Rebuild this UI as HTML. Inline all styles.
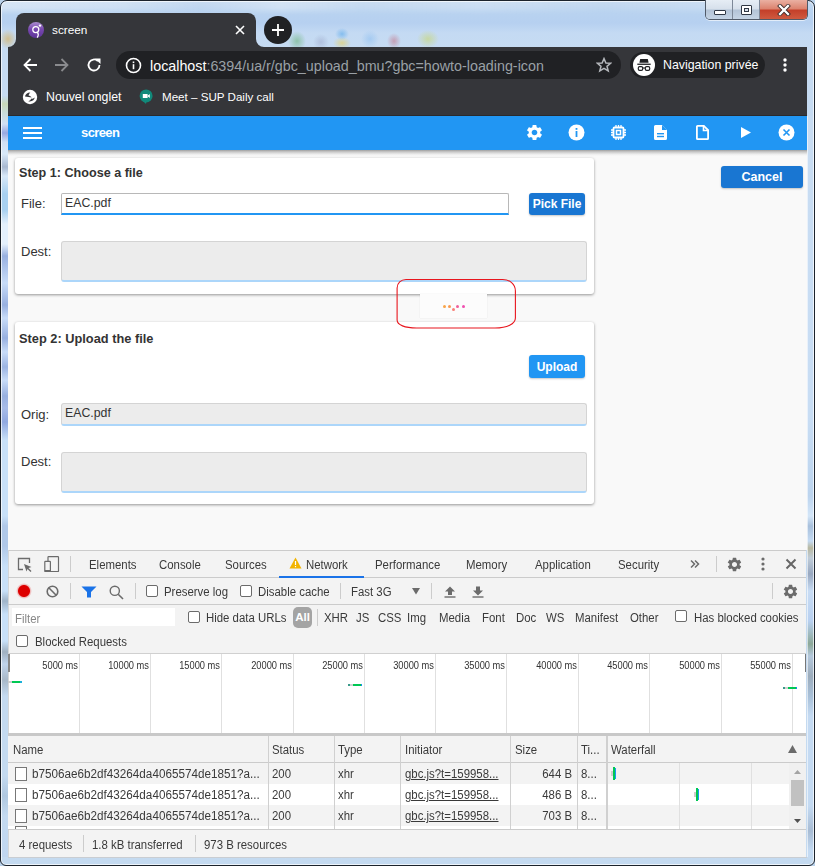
<!DOCTYPE html>
<html><head><meta charset="utf-8">
<style>
*{margin:0;padding:0;box-sizing:border-box}
html,body{width:815px;height:866px;overflow:hidden;font-family:"Liberation Sans",sans-serif}
body{position:relative;background:#b9d1ea}
.a{position:absolute}
#frame{left:0;top:0;width:815px;height:866px;border:1px solid #1c232c;border-radius:7px 7px 6px 6px;box-shadow:inset 0 0 0 1px rgba(255,255,255,.7);
 background:linear-gradient(180deg,#c4d9f0 0,#b9d3f0 10px,#b6d0f0 22px,#c4daf3 32px,#c6dbf2 47px,#c4daf0 100%)}
#chrome{left:8px;top:47px;width:799px;height:69px;background:#35363a;border-bottom:1px solid #2a2a2c}
#tab{left:16px;top:13px;width:240px;height:35px;background:#35363a;border-radius:8px 8px 0 0}
#newtab{left:264px;top:16px;width:28px;height:28px;border-radius:50%;background:#202124}
#omni{left:116px;top:51px;width:505px;height:28px;border-radius:14px;background:#202124}
#incog{left:630px;top:52px;width:135px;height:26px;border-radius:13px;background:#202124}
.wt{color:#e8eaed;font-size:13px;white-space:nowrap}
#appbar{left:8px;top:116px;width:799px;height:34px;background:#2196f3}
#content{left:8px;top:150px;width:799px;height:400px;background:#f9f9f9}
.card{background:#fff;border-radius:3px;box-shadow:0 1px 3px rgba(0,0,0,.4)}
.lbl{font-size:13px;color:#333}
.inp{background:#ececec;border:1px solid #d4d4d4;border-bottom:2px solid #acd6fa;border-radius:3px}
.btn{background:#1976d2;color:#fff;font-weight:bold;font-size:12px;border-radius:3px;text-align:center;box-shadow:0 1px 2px rgba(0,0,0,.22)}
#dev{left:8px;top:550px;width:799px;height:307px;background:#f3f3f3;border-top:1px solid #ccc}
.dt{font-size:12px;color:#3a3a3a;white-space:nowrap;transform:scaleX(.95);transform-origin:0 0}
.ovl{font-size:10px;color:#333;white-space:nowrap;transform:scaleX(.93);transform-origin:100% 0}
.cb{width:12px;height:12px;border:1px solid #6b6b6b;border-radius:2px;background:#fff}
</style></head><body>
<div id="frame" class="a"></div>
<div class="a" style="left:280px;top:24px;width:170px;height:23px;background:
radial-gradient(ellipse 9px 10px at 17px 17px,rgba(120,185,140,.7),rgba(120,185,140,0)),
radial-gradient(ellipse 8px 8px at 41px 18px,rgba(150,160,195,.45),rgba(150,160,195,0)),
radial-gradient(ellipse 7px 6px at 62px 10px,rgba(90,170,235,.6),rgba(90,170,235,0)),
radial-gradient(ellipse 9px 6px at 62px 19px,rgba(225,210,120,.75),rgba(225,210,120,0)),
radial-gradient(ellipse 9px 9px at 90px 15px,rgba(140,190,240,.55),rgba(140,190,240,0)),
radial-gradient(ellipse 7px 8px at 114px 17px,rgba(195,100,120,.5),rgba(195,100,120,0)),
radial-gradient(ellipse 11px 9px at 148px 15px,rgba(200,215,120,.65),rgba(200,215,120,0))"></div>
<div class="a" style="left:1px;top:22px;width:15px;height:28px;background:radial-gradient(ellipse 9px 10px at 7px 17px,rgba(210,185,125,.85),rgba(210,185,125,0))"></div>
<div class="a" style="left:1px;top:96px;width:7px;height:761px;background:linear-gradient(180deg,#c4daf0 0,#c8d8b8 8px,#c8dcd8 16px,#d0e0f4 28px,#98a8e0 37px,#d0e0f4 46px,#d8e8f8 58px,#a8b8d0 71px,#d8e8f8 80px,#a8d0f0 98px,#a8d0f0 114px,#e4f0fc 128px,#e4f0fc 148px,#98b0e0 160px,#c8dcf8 187px,#98b0e0 209px,#c8dcf8 222px,#98b0e0 242px,#c8dcf8 256px,#9cb4e2 271px,#c8dcf8 284px,#98b0e0 300px,#a8bce8 312px,#90a8e0 326px,#c8e0f8 344px,#c8e0f8 420px,#b0c8e8 430px,#b0c8e8 450px,#c8e0f8 470px,#c8e0f8 495px,#a0b4c8 505px,#c8e0f8 518px,#c8e0f8 545px,#a0b0c0 556px,#c0d4ec 568px,#a8b8c8 584px,#c4daf0 600px,#c4daf0 680px,#b0c8e0 700px,#c4daf0 720px,#c0d6f0 761px);box-shadow:inset 1px 0 0 rgba(255,255,255,.7)"></div>
<div class="a" style="left:807px;top:116px;width:7px;height:741px;background:linear-gradient(180deg,#c8dcf2 0,#c8ddf4 300px,#bcd4ee 380px,#d4e6f8 400px,#a8c0dc 410px,#c4daf2 425px,#b8b8a0 432px,#c0ccd8 442px,#98a8c0 458px,#c8dcf4 475px,#b8d0f0 505px,#8ca898 528px,#b4c8dc 540px,#9cacbc 560px,#a8c0d8 580px,#c4daf2 600px,#c4daf2 690px,#a8bcd4 715px,#c4daf2 735px,#c4daf2 741px);box-shadow:inset 1px 0 0 rgba(255,255,255,.6),inset -1px 0 0 rgba(255,255,255,.7)"></div>
<div class="a" style="left:1px;top:1px;width:704px;height:14px;border-radius:6px 0 0 0;background:linear-gradient(90deg,rgba(255,255,255,.35) 0,rgba(255,255,255,.25) 120px,rgba(255,255,255,.05) 200px,rgba(255,255,255,.3) 280px,rgba(255,255,255,.1) 360px,rgba(255,255,255,.2) 480px,rgba(255,255,255,.05) 600px,rgba(255,255,255,.15) 704px);-webkit-mask-image:linear-gradient(180deg,#000 0,#000 50%,transparent 100%)"></div>
<div id="chrome" class="a"></div>
<div id="tab" class="a"></div>
<div id="newtab" class="a"></div>
<div id="omni" class="a"></div>
<div id="incog" class="a"></div>

<!-- window controls -->
<div class="a" style="left:705px;top:0;width:103px;height:20px;border:1px solid #505a68;border-top:none;border-radius:0 0 5px 5px;overflow:hidden;display:flex;box-shadow:0 1px 0 rgba(255,255,255,.6)">
 <div style="width:27px;height:100%;background:linear-gradient(#e6edf5 0%,#d6e0eb 48%,#b3c3d6 52%,#c5d4e4 100%);border-right:1px solid #7d8898;position:relative"><div class="a" style="left:8px;top:10px;width:12px;height:5px;background:#fff;border:1px solid #303844;border-radius:1px"></div></div>
 <div style="width:27px;height:100%;background:linear-gradient(#e6edf5 0%,#d6e0eb 48%,#b3c3d6 52%,#c5d4e4 100%);border-right:1px solid #7d8898;position:relative"><div class="a" style="left:8px;top:5px;width:11px;height:10px;border:1px solid #303844;background:#fff;border-radius:1px"><div class="a" style="left:2px;top:2px;width:5px;height:4px;border:1px solid #303844;background:#d8e0ea"></div></div></div>
 <div style="flex:1;height:100%;background:linear-gradient(#eab0a2 0%,#dc8470 45%,#c4402a 55%,#cf5a40 100%);position:relative">
  <svg class="a" style="left:17px;top:4px" width="14" height="12" viewBox="0 0 14 12"><path d="M3 2L11 10M11 2L3 10" stroke="#3a2a2a" stroke-width="4" stroke-linecap="square"/><path d="M3 2L11 10M11 2L3 10" stroke="#fff" stroke-width="2.3" stroke-linecap="square"/></svg>
 </div>
</div>
<!-- tab -->
<svg class="a" style="left:8px;top:39px" width="8" height="8" viewBox="0 0 8 8"><path d="M8 0V8H0A8 8 0 0 0 8 0Z" fill="#35363a"/></svg>
<svg class="a" style="left:256px;top:39px" width="8" height="8" viewBox="0 0 8 8"><path d="M0 0V8H8A8 8 0 0 1 0 0Z" fill="#35363a"/></svg>
<svg class="a" style="left:28px;top:22px" width="16" height="16" viewBox="0 0 16 16">
 <defs><linearGradient id="fg" x1="0" y1="0" x2="0" y2="1"><stop offset="0" stop-color="#ab8dd0"/><stop offset=".45" stop-color="#7848b0"/><stop offset="1" stop-color="#5e3498"/></linearGradient></defs>
 <circle cx="8" cy="8" r="8" fill="url(#fg)"/>
 <circle cx="7.8" cy="7.6" r="3" fill="none" stroke="#fff" stroke-width="1.3"/>
 <path d="M9.4 10.2C10.4 11.5 10.4 13.8 9.2 15.6" fill="none" stroke="#fff" stroke-width="1.3"/>
 <circle cx="12" cy="3.6" r="1.2" fill="#fff"/>
</svg>
<div class="a wt" style="left:52px;top:23px;font-size:11.8px;color:#fff">screen</div>
<svg class="a" style="left:235px;top:25px" width="10" height="10" viewBox="0 0 10 10"><path d="M1 1L9 9M9 1L1 9" stroke="#fff" stroke-width="1.6"/></svg>
<svg class="a" style="left:271px;top:23px" width="14" height="14" viewBox="0 0 14 14"><path d="M7 1V13M1 7H13" stroke="#fff" stroke-width="1.8"/></svg>
<!-- toolbar icons -->
<svg class="a" style="left:22px;top:57px" width="16" height="16" viewBox="0 0 16 16"><path d="M15 8H2.5M8.5 2L2.5 8L8.5 14" fill="none" stroke="#fff" stroke-width="1.8"/></svg>
<svg class="a" style="left:54px;top:57px" width="16" height="16" viewBox="0 0 16 16"><path d="M1 8H13.5M7.5 2L13.5 8L7.5 14" fill="none" stroke="#8a8b8e" stroke-width="1.8"/></svg>
<svg class="a" style="left:86px;top:57px" width="16" height="16" viewBox="0 0 16 16"><path d="M13.5 8A5.5 5.5 0 1 1 11.9 4.1" fill="none" stroke="#fff" stroke-width="1.8"/><path d="M9 1.5H14.5V7Z" fill="#fff"/></svg>
<svg class="a" style="left:125px;top:57px" width="17" height="17" viewBox="0 0 17 17"><circle cx="8.5" cy="8.5" r="7" fill="none" stroke="#fff" stroke-width="1.6"/><rect x="7.7" y="7.2" width="1.6" height="5" fill="#fff"/><rect x="7.7" y="4.5" width="1.6" height="1.6" fill="#fff"/></svg>
<div class="a wt" style="left:150px;top:58px;font-size:14.3px;color:#fff">localhost<span style="color:#9aa0a6">:6394/ua/r/gbc_upload_bmu?gbc=howto-loading-icon</span></div>
<svg class="a" style="left:596px;top:57px" width="16" height="16" viewBox="0 0 16 16"><path d="M8 1.6L9.9 6.1L14.6 6.3L11 9.3L12.2 14L8 11.4L3.8 14L5 9.3L1.4 6.3L6.1 6.1Z" fill="none" stroke="#b5b8bc" stroke-width="1.5" stroke-linejoin="miter"/></svg>
<div class="a" style="left:633px;top:54px;width:22px;height:22px;border-radius:50%;background:#fff"></div>
<svg class="a" style="left:633px;top:54px" width="22" height="22" viewBox="0 0 22 22"><path d="M7.2 5H14.8L15.6 8.8H6.4Z" fill="#202124"/><rect x="4.3" y="9.6" width="13.4" height="1.3" fill="#202124"/><rect x="5.3" y="12.6" width="4.4" height="3.8" rx="1.3" fill="none" stroke="#202124" stroke-width="1.2"/><rect x="12.3" y="12.6" width="4.4" height="3.8" rx="1.3" fill="none" stroke="#202124" stroke-width="1.2"/><path d="M9.7 14H12.3" stroke="#202124" stroke-width="1.1"/></svg>
<div class="a wt" style="left:663px;top:58px;font-size:12.35px;color:#fff">Navigation privée</div>
<svg class="a" style="left:782px;top:57px" width="6" height="16" viewBox="0 0 6 16"><circle cx="3" cy="3" r="1.7" fill="#fff"/><circle cx="3" cy="8" r="1.7" fill="#fff"/><circle cx="3" cy="13" r="1.7" fill="#fff"/></svg>
<!-- bookmarks -->
<svg class="a" style="left:22px;top:89px" width="16" height="16" viewBox="0 0 16 16"><circle cx="8" cy="8" r="7.2" fill="#fff"/><path d="M3 7.6C3.3 5.2 5.3 3.5 8.3 3.4C7.2 4.4 7 5.4 6.4 6.3C7.8 6.8 9 7.4 9.6 8.6C8 8.2 5.2 7.9 3 7.6Z" fill="#35363a"/><path d="M6.3 12.4C7.8 11.6 8.9 10.6 9.4 9.4C10.5 9.9 11.7 9.6 12.7 8.6C12.5 11.2 10 13 6.3 12.4Z" fill="#35363a"/></svg>
<div class="a wt" style="left:46px;top:90px;font-size:12.35px;color:#fff">Nouvel onglet</div>
<svg class="a" style="left:139px;top:89px" width="15" height="16" viewBox="0 0 15 16"><circle cx="7.1" cy="6.9" r="6.5" fill="#11897a"/><path d="M4 12L7 15L7.5 12Z" fill="#11897a"/><rect x="3.8" y="5" width="4.8" height="4" fill="#fff"/><path d="M8.3 7L10.8 5V9Z" fill="#fff"/></svg>
<div class="a wt" style="left:162px;top:90px;font-size:11.6px;color:#fff">Meet – SUP Daily call</div>
<div id="appbar" class="a"></div>
<div id="content" class="a"></div>

<!-- app bar contents -->
<div class="a" style="left:23px;top:127px;width:19px;height:2px;background:#fff"></div>
<div class="a" style="left:23px;top:132px;width:19px;height:2px;background:#fff"></div>
<div class="a" style="left:23px;top:137px;width:19px;height:2px;background:#fff"></div>
<div class="a" style="left:81px;top:125px;font-size:13px;font-weight:bold;color:#fff;white-space:nowrap;letter-spacing:-0.6px">screen</div>
<svg class="a" style="left:525px;top:123px" width="19" height="19" viewBox="0 0 24 24"><path fill="#fff" d="M19.14 12.94c.04-.3.06-.61.06-.94 0-.32-.02-.64-.07-.94l2.03-1.58a.49.49 0 0 0 .12-.61l-1.92-3.32a.488.488 0 0 0-.59-.22l-2.39.96c-.5-.38-1.03-.7-1.62-.94l-.36-2.54a.484.484 0 0 0-.48-.41h-3.84c-.24 0-.43.17-.47.41l-.36 2.54c-.59.24-1.13.57-1.62.94l-2.39-.96c-.22-.08-.47 0-.59.22L2.74 8.87c-.12.21-.8.47.12.61l2.03 1.58c-.05.3-.09.63-.09.94s.02.64.07.94l-2.03 1.58a.49.49 0 0 0-.12.61l1.92 3.32c.12.22.37.29.59.22l2.39-.96c.5.38 1.03.7 1.62.94l.36 2.54c.05.24.24.41.48.41h3.84c.24 0 .44-.17.47-.41l.36-2.54c.59-.24 1.13-.56 1.62-.94l2.39.96c.22.08.47 0 .59-.22l1.92-3.32c.12-.22.07-.47-.12-.61l-2.01-1.58zM12 15.6c-1.98 0-3.6-1.62-3.6-3.6s1.62-3.6 3.6-3.6 3.6 1.62 3.6 3.6-1.62 3.6-3.6 3.6z"/></svg>
<svg class="a" style="left:568px;top:124px" width="17" height="17" viewBox="0 0 17 17"><circle cx="8.5" cy="8.5" r="8" fill="#fff"/><rect x="7.6" y="7" width="1.8" height="6" fill="#2196f3"/><rect x="7.6" y="4" width="1.8" height="1.8" fill="#2196f3"/></svg>
<svg class="a" style="left:610px;top:124px" width="17" height="17" viewBox="0 0 17 17"><rect x="3.5" y="3.5" width="10" height="10" rx="1" fill="none" stroke="#fff" stroke-width="1.8"/><rect x="6.5" y="6.5" width="4" height="4" fill="none" stroke="#fff" stroke-width="1.5"/><path d="M6 1v2M8.5 1v2M11 1v2M6 14v2M8.5 14v2M11 14v2M1 6h2M1 8.5h2M1 11h2M14 6h2M14 8.5h2M14 11h2" stroke="#fff" stroke-width="1.3"/></svg>
<svg class="a" style="left:654px;top:125px" width="13" height="15" viewBox="0 0 13 15"><path d="M1.5 0H8L13 5V13.5A1.5 1.5 0 0 1 11.5 15H1.5A1.5 1.5 0 0 1 0 13.5V1.5A1.5 1.5 0 0 1 1.5 0Z" fill="#fff"/><path d="M8 0V5H13" fill="#2196f3"/><path d="M8 0L13 5H8Z" fill="#fff" opacity="0"/><rect x="3" y="8" width="7" height="1.4" fill="#2196f3"/><rect x="3" y="10.8" width="7" height="1.4" fill="#2196f3"/></svg>
<svg class="a" style="left:696px;top:125px" width="13" height="15" viewBox="0 0 13 15"><path d="M1.5 0.9H7.8L12.1 5.2V13.5A.6.6 0 0 1 11.5 14.1H1.5A.6.6 0 0 1 0.9 13.5V1.5A.6.6 0 0 1 1.5 0.9Z" fill="none" stroke="#fff" stroke-width="1.8"/><path d="M7.5 0.5V5.5H12.5" fill="none" stroke="#fff" stroke-width="1.6"/></svg>
<svg class="a" style="left:741px;top:127px" width="10" height="11" viewBox="0 0 10 11"><path d="M0 0L10 5.5L0 11Z" fill="#fff"/></svg>
<svg class="a" style="left:778px;top:124px" width="17" height="17" viewBox="0 0 17 17"><circle cx="8.5" cy="8.5" r="8" fill="#fff"/><path d="M5.5 5.5L11.5 11.5M11.5 5.5L5.5 11.5" stroke="#2196f3" stroke-width="1.6"/></svg>
<!-- app bar shadow -->
<div class="a" style="left:8px;top:150px;width:799px;height:6px;background:linear-gradient(rgba(0,0,0,.36),rgba(0,0,0,.2) 30%,rgba(0,0,0,.05) 70%,rgba(0,0,0,0))"></div>
<!-- card 1 -->
<div class="a card" style="left:15px;top:158px;width:579px;height:136px"></div>
<div class="a" style="left:19px;top:166px;font-size:12.6px;font-weight:bold;color:#333;white-space:nowrap">Step 1: Choose a file</div>
<div class="a lbl" style="left:21px;top:196px">File:</div>
<div class="a" style="left:61px;top:193px;width:448px;height:22px;background:#fff;border:1px solid #b8b8b8;border-bottom:2px solid #2196f3;border-radius:2px 2px 0 0"></div>
<div class="a lbl" style="left:65px;top:196px;font-size:12.3px">EAC.pdf</div>
<div class="a btn" style="left:529px;top:193px;width:56px;height:22px;line-height:22px">Pick File</div>
<div class="a lbl" style="left:21px;top:244px">Dest:</div>
<div class="a inp" style="left:61px;top:241px;width:526px;height:41px"></div>
<div class="a btn" style="left:721px;top:166px;width:82px;height:22px;line-height:22px;font-size:12.5px">Cancel</div>
<!-- spinner -->
<div class="a" style="left:420px;top:294px;width:67px;height:24px;background:#fcfcfc;box-shadow:0 0 1px rgba(0,0,0,.12)"></div>

<div class="a" style="left:442.5px;top:304.5px;width:3px;height:3px;border-radius:50%;background:#f9a54a"></div>
<div class="a" style="left:447.5px;top:304.5px;width:3px;height:3px;border-radius:50%;background:#f99a50"></div>
<div class="a" style="left:451.5px;top:307.5px;width:3px;height:3px;border-radius:50%;background:#f98078"></div>
<div class="a" style="left:455.5px;top:304.5px;width:3px;height:3px;border-radius:50%;background:#f0609a"></div>
<div class="a" style="left:461.5px;top:304.5px;width:3px;height:3px;border-radius:50%;background:#f050b0"></div>
<!-- card 2 -->
<div class="a card" style="left:15px;top:322px;width:579px;height:182px"></div>
<div class="a" style="left:19px;top:331px;font-size:12.8px;font-weight:bold;color:#333;white-space:nowrap">Step 2: Upload the file</div>
<div class="a btn" style="left:529px;top:355px;width:56px;height:23px;line-height:24px;background:#2196f3">Upload</div>
<div class="a lbl" style="left:21px;top:407px">Orig:</div>
<div class="a inp" style="left:61px;top:403px;width:526px;height:23px"></div>
<div class="a lbl" style="left:65px;top:406px;font-size:12.3px">EAC.pdf</div>
<div class="a lbl" style="left:21px;top:454px">Dest:</div>
<div class="a inp" style="left:61px;top:452px;width:526px;height:41px"></div>

<!-- devtools -->
<div class="a" style="left:8px;top:550px;width:798px;height:307px;background:#f3f3f3"></div>
<div class="a" style="left:8px;top:550px;width:798px;height:1px;background:#cbcbcb"></div>
<div class="a" style="left:8px;top:550px;width:1px;height:307px;background:#d4d6d8"></div>
<div class="a" style="left:8px;top:577px;width:798px;height:1px;background:#cbcbcb"></div>
<div class="a" style="left:8px;top:604px;width:798px;height:1px;background:#cbcbcb"></div>
<!-- tab bar -->
<svg class="a" style="left:17px;top:557px" width="16" height="15" viewBox="0 0 16 15"><path d="M6 12.5H1.5V1.5H12.5V6" fill="none" stroke="#6b6b6b" stroke-width="1.3"/><path d="M7 7L14.5 10L11.5 11L14.5 14L13.5 15L10.5 12L9.5 14.5Z" fill="#6b6b6b"/></svg>
<svg class="a" style="left:43px;top:555px" width="17" height="17" viewBox="0 0 17 17"><rect x="5" y="1.6" width="10.5" height="15" rx=".6" fill="none" stroke="#6b6b6b" stroke-width="1.2"/><rect x="1.8" y="6.4" width="5.6" height="10.2" rx=".6" fill="#f3f3f3" stroke="#6b6b6b" stroke-width="1.2"/><rect x="1.8" y="15" width="5.6" height="1.6" fill="#6b6b6b"/></svg>
<div class="a" style="left:70px;top:556px;width:1px;height:16px;background:#ccc"></div>
<div class="a dt" style="left:89px;top:558px">Elements</div>
<div class="a dt" style="left:159px;top:558px">Console</div>
<div class="a dt" style="left:225px;top:558px">Sources</div>
<svg class="a" style="left:289px;top:557px" width="13" height="12" viewBox="0 0 13 12"><path d="M6.5 0.5L12.5 11.5H0.5Z" fill="#f2b400"/><rect x="5.9" y="4" width="1.2" height="4" fill="#fff"/><rect x="5.9" y="9" width="1.2" height="1.2" fill="#fff"/></svg>
<div class="a dt" style="left:306px;top:558px">Network</div>
<div class="a" style="left:279px;top:576px;width:85px;height:2px;background:#1a73e8"></div>
<div class="a dt" style="left:375px;top:558px">Performance</div>
<div class="a dt" style="left:466px;top:558px">Memory</div>
<div class="a dt" style="left:535px;top:558px">Application</div>
<div class="a dt" style="left:618px;top:558px">Security</div>
<svg class="a" style="left:690px;top:559px" width="10" height="10" viewBox="0 0 10 10"><path d="M1 1.5L4.5 5L1 8.5M5 1.5L8.5 5L5 8.5" fill="none" stroke="#6b6b6b" stroke-width="1.5"/></svg>
<div class="a" style="left:716px;top:556px;width:1px;height:16px;background:#ccc"></div>
<svg class="a" style="left:726px;top:556px" width="17" height="17" viewBox="0 0 24 24"><path fill="#6b6b6b" d="M19.14 12.94c.04-.3.06-.61.06-.94 0-.32-.02-.64-.07-.94l2.03-1.58a.49.49 0 0 0 .12-.61l-1.92-3.32a.488.488 0 0 0-.59-.22l-2.39.96c-.5-.38-1.03-.7-1.62-.94l-.36-2.54a.484.484 0 0 0-.48-.41h-3.84c-.24 0-.43.17-.47.41l-.36 2.54c-.59.24-1.130.57-1.62.94l-2.39-.96c-.22-.08-.47 0-.59.22L2.74 8.87c-.12.21-.8.47.12.61l2.03 1.58c-.05.3-.09.63-.09.94s.02.64.07.94l-2.03 1.58a.49.49 0 0 0-.12.61l1.92 3.32c.12.22.37.29.59.22l2.39-.96c.5.38 1.03.7 1.620.94l.36 2.54c.05.24.24.41.48.41h3.84c.24 0 .44-.17.47-.41l.36-2.54c.59-.24 1.13-.56 1.62-.94l2.39.96c.22.08.47 0 .59-.22l1.92-3.32c.12-.22.07-.47-.12-.61l-2.01-1.58zM12 15.6c-1.98 0-3.6-1.620-3.6-3.6s1.62-3.6 3.6-3.6 3.6 1.62 3.6 3.6-1.62 3.6-3.6 3.6z"/></svg>
<svg class="a" style="left:760px;top:556px" width="6" height="16" viewBox="0 0 6 16"><circle cx="3" cy="3" r="1.6" fill="#6b6b6b"/><circle cx="3" cy="8" r="1.6" fill="#6b6b6b"/><circle cx="3" cy="13" r="1.6" fill="#6b6b6b"/></svg>
<svg class="a" style="left:785px;top:558px" width="12" height="12" viewBox="0 0 12 12"><path d="M1.5 1.5L10.5 10.5M10.5 1.5L1.5 10.5" stroke="#666" stroke-width="2"/></svg>
<!-- toolbar -->
<div class="a" style="left:16px;top:583px;width:16px;height:16px;border-radius:50%;background:radial-gradient(circle,#d00 0,#d00 5.5px,rgba(230,80,80,.35) 6.5px,rgba(230,80,80,0) 8px)"></div>
<svg class="a" style="left:46px;top:585px" width="13" height="13" viewBox="0 0 13 13"><circle cx="6.5" cy="6.5" r="5.3" fill="none" stroke="#6b6b6b" stroke-width="1.6"/><path d="M2.8 2.8L10.2 10.2" stroke="#6b6b6b" stroke-width="1.6"/></svg>
<div class="a" style="left:70px;top:583px;width:1px;height:16px;background:#ccc"></div>
<svg class="a" style="left:81px;top:586px" width="16" height="12" viewBox="0 0 16 12"><path d="M0.5 0.5H15.5L10 6V11.5H6V6Z" fill="#1a73e8"/></svg>
<svg class="a" style="left:109px;top:585px" width="15" height="15" viewBox="0 0 15 15"><circle cx="5.8" cy="5.8" r="4.6" fill="none" stroke="#6b6b6b" stroke-width="1.4"/><path d="M9.2 9.2L14 14" stroke="#6b6b6b" stroke-width="1.6"/></svg>
<div class="a" style="left:135px;top:583px;width:1px;height:16px;background:#ccc"></div>
<div class="a cb" style="left:146px;top:585px"></div>
<div class="a dt" style="left:164px;top:585px">Preserve log</div>
<div class="a cb" style="left:240px;top:585px"></div>
<div class="a dt" style="left:258px;top:585px">Disable cache</div>
<div class="a" style="left:340px;top:583px;width:1px;height:16px;background:#ccc"></div>
<div class="a dt" style="left:351px;top:585px">Fast 3G</div>
<svg class="a" style="left:412px;top:588px" width="8" height="7" viewBox="0 0 8 7"><path d="M0 0H8L4 6.5Z" fill="#6b6b6b"/></svg>
<div class="a" style="left:431px;top:583px;width:1px;height:16px;background:#ccc"></div>
<svg class="a" style="left:444px;top:586px" width="12" height="12" viewBox="0 0 12 12"><path d="M6 0.5L11 5.5H8V9H4V5.5H1Z" fill="#6b6b6b"/><rect x="0.5" y="10.3" width="11" height="1.4" fill="#6b6b6b"/></svg>
<svg class="a" style="left:472px;top:586px" width="12" height="12" viewBox="0 0 12 12"><path d="M6 9.5L11 4.5H8V0.5H4V4.5H1Z" fill="#6b6b6b"/><rect x="0.5" y="10.3" width="11" height="1.4" fill="#6b6b6b"/></svg>
<div class="a" style="left:772px;top:583px;width:1px;height:16px;background:#ccc"></div>
<svg class="a" style="left:782px;top:583px" width="17" height="17" viewBox="0 0 24 24"><path fill="#6b6b6b" d="M19.14 12.94c.04-.3.06-.61.06-.94 0-.32-.02-.64-.07-.94l2.03-1.58a.49.49 0 0 0 .12-.61l-1.92-3.32a.488.488 0 0 0-.59-.22l-2.39.96c-.5-.38-1.03-.7-1.62-.94l-.36-2.54a.484.484 0 0 0-.48-.41h-3.84c-.24 0-.43.17-.47.41l-.36 2.54c-.59.24-1.13.57-1.62.94l-2.39-.96c-.22-.08-.47 0-.59.22L2.74 8.87c-.12.21-.8.47.12.61l2.03 1.58c-.05.3-.09.63-.09.94s.02.64.07.94l-2.03 1.58a.49.49 0 0 0-.12.61l1.92 3.32c.12.22.37.29.59.22l2.39-.96c.5.38 1.03.7 1.62.94l.36 2.54c.05.24.24.41.48.41h3.84c.24 0 .44-.17.47-.41l.36-2.54c.59-.24 1.13-.56 1.62-.94l2.39.96c.22.08.47 0 .59-.22l1.92-3.32c.12-.22.07-.47-.12-.61l-2.01-1.58zM12 15.6c-1.98 0-3.6-1.62-3.6-3.6s1.62-3.6 3.6-3.6 3.6 1.62 3.6 3.6-1.62 3.6-3.6 3.6z"/></svg>
<!-- filter row -->
<div class="a" style="left:12px;top:608px;width:163px;height:18px;background:#fff"></div>
<div class="a dt" style="left:15px;top:612px;color:#888">Filter</div>
<div class="a cb" style="left:188px;top:611px"></div>
<div class="a dt" style="left:206px;top:611px">Hide data URLs</div>
<div class="a" style="left:293px;top:607px;width:19px;height:21px;border-radius:5px;background:#a4a4a4;font-weight:bold;color:#fff;font-size:11.5px;line-height:20px;text-align:center">All</div>
<div class="a" style="left:317px;top:609px;width:1px;height:17px;background:#ccc"></div>
<div class="a dt" style="left:324px;top:611px">XHR</div>
<div class="a dt" style="left:356px;top:611px">JS</div>
<div class="a dt" style="left:378px;top:611px">CSS</div>
<div class="a dt" style="left:407px;top:611px">Img</div>
<div class="a dt" style="left:439px;top:611px">Media</div>
<div class="a dt" style="left:482px;top:611px">Font</div>
<div class="a dt" style="left:516px;top:611px">Doc</div>
<div class="a dt" style="left:546px;top:611px">WS</div>
<div class="a dt" style="left:575px;top:611px">Manifest</div>
<div class="a dt" style="left:630px;top:611px">Other</div>
<div class="a cb" style="left:675px;top:610px"></div>
<div class="a dt" style="left:694px;top:611px">Has blocked cookies</div>
<div class="a cb" style="left:16px;top:635px"></div>
<div class="a dt" style="left:35px;top:635px">Blocked Requests</div>
<!-- overview -->
<div class="a" style="left:9px;top:653px;width:797px;height:82px;background:#fff;border-top:1px solid #d0d0d0"></div>
<div class="a" style="left:8px;top:654px;width:2px;height:18px;background:#888"></div>
<div class="a" style="left:805px;top:654px;width:1px;height:18px;background:#777"></div>
<div class="a" style="left:8px;top:733px;width:798px;height:3px;background:#c8c8c8"></div>
<div class="a" style="left:79px;top:654px;width:1px;height:79px;background:#e0e0e0"></div>
<div class="a ovl" style="left:-41px;top:660px;width:119px;text-align:right">5000 ms</div>
<div class="a" style="left:150px;top:654px;width:1px;height:79px;background:#e0e0e0"></div>
<div class="a ovl" style="left:30px;top:660px;width:119px;text-align:right">10000 ms</div>
<div class="a" style="left:221px;top:654px;width:1px;height:79px;background:#e0e0e0"></div>
<div class="a ovl" style="left:101px;top:660px;width:119px;text-align:right">15000 ms</div>
<div class="a" style="left:293px;top:654px;width:1px;height:79px;background:#e0e0e0"></div>
<div class="a ovl" style="left:173px;top:660px;width:119px;text-align:right">20000 ms</div>
<div class="a" style="left:364px;top:654px;width:1px;height:79px;background:#e0e0e0"></div>
<div class="a ovl" style="left:244px;top:660px;width:119px;text-align:right">25000 ms</div>
<div class="a" style="left:435px;top:654px;width:1px;height:79px;background:#e0e0e0"></div>
<div class="a ovl" style="left:315px;top:660px;width:119px;text-align:right">30000 ms</div>
<div class="a" style="left:506px;top:654px;width:1px;height:79px;background:#e0e0e0"></div>
<div class="a ovl" style="left:386px;top:660px;width:119px;text-align:right">35000 ms</div>
<div class="a" style="left:578px;top:654px;width:1px;height:79px;background:#e0e0e0"></div>
<div class="a ovl" style="left:458px;top:660px;width:119px;text-align:right">40000 ms</div>
<div class="a" style="left:649px;top:654px;width:1px;height:79px;background:#e0e0e0"></div>
<div class="a ovl" style="left:529px;top:660px;width:119px;text-align:right">45000 ms</div>
<div class="a" style="left:721px;top:654px;width:1px;height:79px;background:#e0e0e0"></div>
<div class="a ovl" style="left:601px;top:660px;width:119px;text-align:right">50000 ms</div>
<div class="a" style="left:792px;top:654px;width:1px;height:79px;background:#e0e0e0"></div>
<div class="a ovl" style="left:672px;top:660px;width:119px;text-align:right">55000 ms</div>
<div class="a" style="left:8px;top:681px;width:14px;height:2px;background:linear-gradient(90deg,#ccc 0 4px,#00c853 4px 12px,#1ab0d8 12px)"></div>
<div class="a" style="left:348px;top:684px;width:14px;height:2px;background:linear-gradient(90deg,#3a9a8a 0 2px,#d0d0d0 2px 5px,#00c853 5px 13px,#1a8af0 13px)"></div>
<div class="a" style="left:783px;top:687px;width:14px;height:2px;background:linear-gradient(90deg,#3a9a8a 0 2px,#d0d0d0 2px 5px,#00c853 5px 13px,#1a8af0 13px)"></div>
<!-- table -->
<div class="a" style="left:8px;top:736px;width:798px;height:27px;background:#f3f3f3;border-bottom:1px solid #cbcbcb"></div>
<div class="a" style="left:8px;top:763px;width:781px;height:21px;background:#f3f3f3"></div>
<div class="a" style="left:8px;top:784px;width:781px;height:21px;background:#fff"></div>
<div class="a" style="left:8px;top:805px;width:781px;height:21px;background:#f3f3f3"></div>
<div class="a" style="left:8px;top:826px;width:781px;height:4px;background:#fff"></div>
<div class="a" style="left:8px;top:829px;width:798px;height:1px;background:#cbcbcb"></div>
<div class="a" style="left:268px;top:736px;width:1px;height:93px;background:#d0d0d0"></div>
<div class="a" style="left:334px;top:736px;width:1px;height:93px;background:#d0d0d0"></div>
<div class="a" style="left:400px;top:736px;width:1px;height:93px;background:#d0d0d0"></div>
<div class="a" style="left:510px;top:736px;width:1px;height:93px;background:#d0d0d0"></div>
<div class="a" style="left:577px;top:736px;width:1px;height:93px;background:#d0d0d0"></div>
<div class="a" style="left:606px;top:736px;width:1px;height:93px;background:#d0d0d0"></div>
<div class="a" style="left:607px;top:736px;width:1px;height:93px;background:#d0d0d0"></div>
<div class="a" style="left:679px;top:763px;width:1px;height:66px;background:#e0e0e0"></div>
<div class="a" style="left:751px;top:763px;width:1px;height:66px;background:#e0e0e0"></div>
<div class="a dt" style="left:13px;top:743px">Name</div>
<div class="a dt" style="left:272px;top:743px">Status</div>
<div class="a dt" style="left:338px;top:743px">Type</div>
<div class="a dt" style="left:405px;top:743px">Initiator</div>
<div class="a dt" style="left:515px;top:743px">Size</div>
<div class="a dt" style="left:581px;top:743px">Ti...</div>
<div class="a dt" style="left:611px;top:743px">Waterfall</div>
<svg class="a" style="left:788px;top:745px" width="9" height="8" viewBox="0 0 9 8"><path d="M4.5 0L9 8H0Z" fill="#6b6b6b"/></svg>
<div class="a" style="left:15px;top:767px;width:12px;height:14px;border:1px solid #777;background:#fff"></div>
<div class="a dt" style="left:32px;top:767px;transform:scaleX(.975)">b7506ae6b2df43264da4065574de1851?a...</div>
<div class="a dt" style="left:272px;top:767px">200</div>
<div class="a dt" style="left:338px;top:767px">xhr</div>
<div class="a dt" style="left:405px;top:767px;text-decoration:underline">gbc.js?t=159958...</div>
<div class="a dt" style="left:450px;top:767px;width:122px;text-align:right;transform-origin:100% 0">644 B</div>
<div class="a dt" style="left:581px;top:767px">8...</div>
<div class="a" style="left:15px;top:788px;width:12px;height:14px;border:1px solid #777;background:#fff"></div>
<div class="a dt" style="left:32px;top:788px;transform:scaleX(.975)">b7506ae6b2df43264da4065574de1851?a...</div>
<div class="a dt" style="left:272px;top:788px">200</div>
<div class="a dt" style="left:338px;top:788px">xhr</div>
<div class="a dt" style="left:405px;top:788px;text-decoration:underline">gbc.js?t=159958...</div>
<div class="a dt" style="left:450px;top:788px;width:122px;text-align:right;transform-origin:100% 0">486 B</div>
<div class="a dt" style="left:581px;top:788px">8...</div>
<div class="a" style="left:15px;top:809px;width:12px;height:14px;border:1px solid #777;background:#fff"></div>
<div class="a dt" style="left:32px;top:809px;transform:scaleX(.975)">b7506ae6b2df43264da4065574de1851?a...</div>
<div class="a dt" style="left:272px;top:809px">200</div>
<div class="a dt" style="left:338px;top:809px">xhr</div>
<div class="a dt" style="left:405px;top:809px;text-decoration:underline">gbc.js?t=159958...</div>
<div class="a dt" style="left:450px;top:809px;width:122px;text-align:right;transform-origin:100% 0">703 B</div>
<div class="a dt" style="left:581px;top:809px">8...</div>
<div class="a" style="left:15px;top:826px;width:12px;height:3px;border:1px solid #777;border-bottom:none;background:#fff"></div>
<div class="a" style="left:611px;top:771px;width:2px;height:5px;background:#d0cccc"></div>
<div class="a" style="left:613px;top:767px;width:2px;height:13px;background:#00c853"></div><div class="a" style="left:615px;top:768px;width:1px;height:11px;background:#1a9af0"></div>
<div class="a" style="left:694px;top:792px;width:2px;height:5px;background:#d0cccc"></div>
<div class="a" style="left:696px;top:788px;width:2px;height:13px;background:#00c853"></div><div class="a" style="left:698px;top:789px;width:1px;height:11px;background:#1a9af0"></div>
<!-- scrollbar -->
<div class="a" style="left:789px;top:763px;width:17px;height:66px;background:#f0f0f0"></div>
<svg class="a" style="left:794px;top:770px" width="7" height="4" viewBox="0 0 7 4"><path d="M3.5 0L7 4H0Z" fill="#a3a3a3"/></svg>
<div class="a" style="left:791px;top:780px;width:13px;height:26px;background:#c1c1c1"></div>
<svg class="a" style="left:794px;top:819px" width="7" height="4" viewBox="0 0 7 4"><path d="M0 0H7L3.5 4Z" fill="#505050"/></svg>
<!-- status bar -->
<div class="a" style="left:8px;top:857px;width:799px;height:1px;background:#c9cdd2"></div>
<div class="a dt" style="left:19px;top:838px">4 requests</div>
<div class="a" style="left:83px;top:835px;width:1px;height:17px;background:#ccc"></div>
<div class="a dt" style="left:92px;top:838px">1.8 kB transferred</div>
<div class="a" style="left:195px;top:835px;width:1px;height:17px;background:#ccc"></div>
<div class="a dt" style="left:204px;top:838px">973 B resources</div>

<svg class="a" style="left:396px;top:278px;z-index:5" width="122" height="52" viewBox="0 0 122 52"><path d="M10 1.5H106.6C113.5 1.5 119.4 6 119.4 13V40C119.4 46 111 50 99 50H20.5C9 50 1.1 47 1.1 42V10C1.1 5 5 1.5 10 1.5Z" fill="none" stroke="#e8161e" stroke-width="1.1"/></svg>
</body></html>
